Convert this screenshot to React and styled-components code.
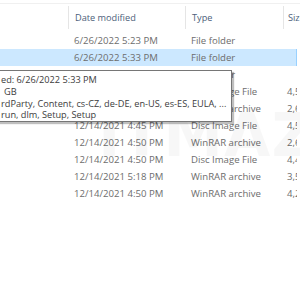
import React from "react";
import styled, { createGlobalStyle } from "styled-components";

const Global = createGlobalStyle`
  html, body { margin: 0; padding: 0; background: #ffffff; }
  body { font-family: "Open Sans", "Noto Sans", sans-serif; overflow: hidden; }
`;

const Window = styled.div`
  position: relative;
  width: 300px;
  height: 300px;
  overflow: hidden;
  background: #ffffff;
  padding-top: 3px;
  box-sizing: border-box;
`;

const TopEdge = styled.div`
  height: 1px;
  background: #f0f0f0;
`;

const Header = styled.div`
  display: grid;
  grid-template-columns: 68px 117px 98px 1fr;
  height: 28px;
  align-items: stretch;
`;

const HeaderCell = styled.div`
  display: flex;
  align-items: center;
  padding-left: ${(p) => p.$pad || 6}px;
  font-size: 9.2px;
  color: #4c607a;
  white-space: nowrap;
  overflow: hidden;
  border-left: ${(p) => (p.$first ? "none" : "1px solid #e5e5e5")};
  margin: 2px 0 3px;
`;

const Rows = styled.div`
  display: flex;
  flex-direction: column;
`;

const Row = styled.div`
  display: grid;
  grid-template-columns: 68px 117px 98px 1fr;
  height: 17px;
  align-items: center;
  width: 297px;
  box-sizing: border-box;
  background: ${(p) => (p.$selected ? "#cce8ff" : "transparent")};
  border-right: ${(p) => (p.$selected ? "1px solid #99d1ff" : "none")};
`;

const Cell = styled.div`
  padding-left: ${(p) => p.$pad || 6}px;
  font-size: 9.6px;
  color: #6d6d6d;
  white-space: nowrap;
  overflow: hidden;
`;

const Watermark = styled.div`
  position: absolute;
  left: 98px;
  top: 100px;
  font-family: "DejaVu Sans", sans-serif;
  font-weight: 900;
  font-size: 60px;
  letter-spacing: 1px;
  color: rgba(0, 0, 0, 0.03);
  white-space: nowrap;
  pointer-events: none;
`;

const Tooltip = styled.div`
  position: absolute;
  left: -2px;
  top: 70px;
  width: 234px;
  height: 52px;
  box-sizing: border-box;
  background: #ffffff;
  border: 1px solid #767676;
  box-shadow: 2px 2px 1px rgba(0, 0, 0, 0.25);
  padding: 3px 0 0 2px;
  display: flex;
  flex-direction: column;
`;

const TipLine = styled.div`
  font-size: 9.2px;
  line-height: 11.8px;
  color: #3c3c3c;
  white-space: nowrap;
  padding-left: ${(p) => p.$indent || 0}px;
`;

const rows = [
  { date: "6/26/2022 5:23 PM", type: "File folder", size: "" },
  { date: "6/26/2022 5:33 PM", type: "File folder", size: "", selected: true },
  { date: "6/26/2022 5:33 PM", type: "File folder", size: "" },
  { date: "12/14/2021 4:45 PM", type: "Disc Image File", size: "4,5" },
  { date: "12/14/2021 4:50 PM", type: "WinRAR archive", size: "2,6" },
  { date: "12/14/2021 4:45 PM", type: "Disc Image File", size: "4,5" },
  { date: "12/14/2021 4:50 PM", type: "WinRAR archive", size: "2,6" },
  { date: "12/14/2021 4:50 PM", type: "Disc Image File", size: "4,4" },
  { date: "12/14/2021 5:18 PM", type: "WinRAR archive", size: "3,5" },
  { date: "12/14/2021 4:50 PM", type: "WinRAR archive", size: "4,2" },
];

export default function App() {
  return (
    <>
      <Global />
      <Window>
        <TopEdge />
        <Header>
          <HeaderCell $first />
          <HeaderCell>Date modified</HeaderCell>
          <HeaderCell>Type</HeaderCell>
          <HeaderCell $pad={4}>Size</HeaderCell>
        </Header>
        <Rows>
          {rows.map((r, i) => (
            <Row key={i} $selected={r.selected}>
              <Cell />
              <Cell>{r.date}</Cell>
              <Cell>{r.type}</Cell>
              <Cell $pad={4}>{r.size}</Cell>
            </Row>
          ))}
        </Rows>
        <Watermark>ITMAZIZONE</Watermark>
        <Tooltip>
          <TipLine>ed: 6/26/2022 5:33 PM</TipLine>
          <TipLine $indent={3}>GB</TipLine>
          <TipLine>rdParty, Content, cs-CZ, de-DE, en-US, es-ES, EULA, ...</TipLine>
          <TipLine>run, dlm, Setup, Setup</TipLine>
        </Tooltip>
      </Window>
    </>
  );
}
